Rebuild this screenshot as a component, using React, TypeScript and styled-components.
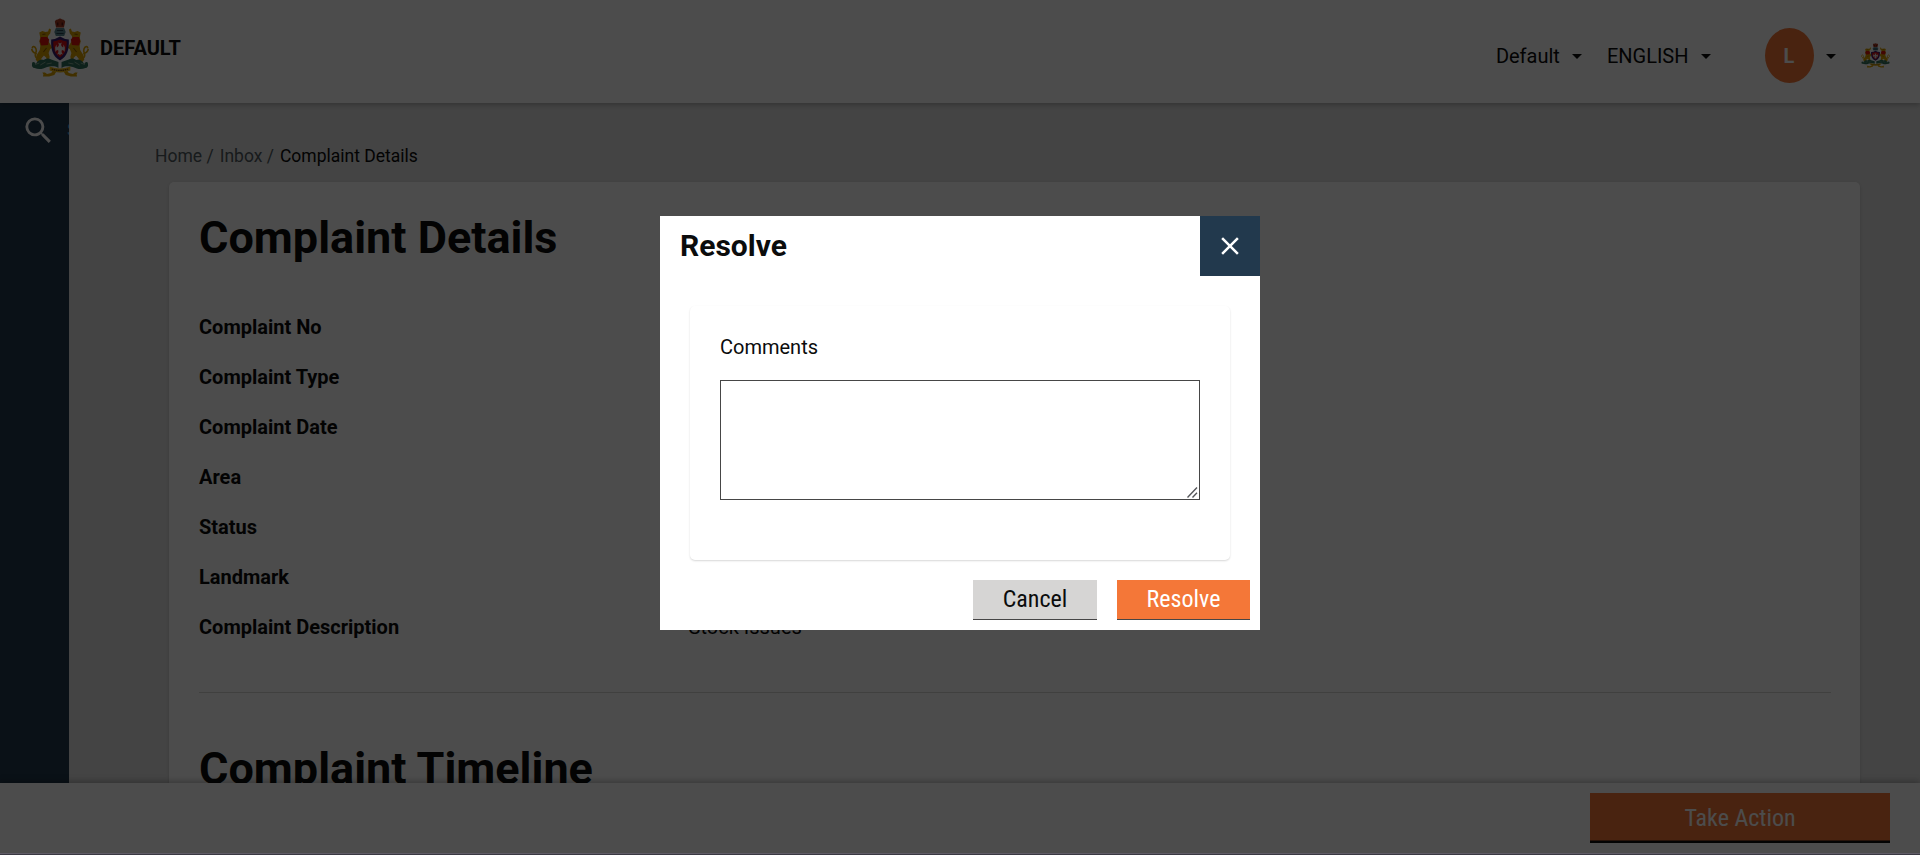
import React from 'react';
import styled, { createGlobalStyle } from 'styled-components';

const GlobalStyle = createGlobalStyle`
  *, *::before, *::after { box-sizing: border-box; }
  body { margin: 0; font-family: Roboto, sans-serif; color: #0b0c0c; }
  h1, h2, p { margin: 0; }
`;

const Page = styled.div`
  display: flex;
  flex-direction: column;
  height: 100vh;
  overflow: hidden;
  background: #e3e3e3;
`;

const TopBar = styled.header`
  position: relative;
  z-index: 2;
  display: flex;
  justify-content: space-between;
  align-items: flex-start;
  flex: none;
  height: 103px;
  padding: 0 30px 0 31px;
  background: #fff;
  box-shadow: 0 2px 5px rgba(0, 0, 0, 0.24);
`;

const Brand = styled.div`
  display: flex;
  align-items: center;
  gap: 11px;
  height: 96px;
  font-size: 20px;
  font-weight: 700;
`;

const Tools = styled.div`
  display: flex;
  align-items: center;
  height: 103px;
  padding-top: 8px;
  font-size: 20px;
`;

const Selector = styled.div<{ $after: number }>`
  display: flex;
  align-items: center;
  gap: 5.500px;
  margin-right: ${({ $after }) => $after}px;
`;

const Avatar = styled.div`
  display: flex;
  align-items: center;
  justify-content: center;
  width: 49px;
  height: 55px;
  border-radius: 50%;
  background: #f47738;
  color: #fff;
  font-weight: 700;
`;

const Middle = styled.div`
  display: flex;
  flex: 1;
  min-height: 0;
`;

const SideBar = styled.nav`
  display: flex;
  align-items: flex-start;
  flex: 0 0 69px;
  overflow: hidden;
  padding: 10px 0 0 21px;
  background: #22394d;
`;

const SearchIcon = styled.svg`
  flex: none;
  width: 35px;
  height: 35px;
  fill: #fff;
`;

const SideLabel = styled.span`
  margin-left: 11px;
  font-size: 18px;
  line-height: 34px;
  color: #3aa0d8;
`;

const Content = styled.main`
  flex: 1;
  min-width: 0;
  overflow: hidden;
  padding: 40px 60px 0 86px;
`;

const Breadcrumb = styled.div`
  display: flex;
  gap: 6px;
  height: 39px;
  font-size: 17.5px;
  line-height: 26px;
`;

const Crumb = styled.span<{ $current?: boolean }>`
  color: ${({ $current }) => ($current ? '#0b0c0c' : '#505a5f')};
`;

const DetailCard = styled.section`
  height: 760px;
  margin-left: 14px;
  padding: 26px 29px 25px 30px;
  border-radius: 5px;
  background: #fff;
  box-shadow: 0 1px 3px rgba(0, 0, 0, 0.16);
`;

const Heading = styled.h1`
  font-size: 45px;
  line-height: 60px;
  font-weight: 700;
`;

const Rows = styled.div`
  padding: 34px 0 40px;
  border-bottom: 1px solid #d6d5d4;
  margin-bottom: 46px;
`;

const Row = styled.div`
  display: grid;
  grid-template-columns: 30% 70%;
  height: 50px;
  font-size: 20px;
  line-height: 50px;
`;

const RowLabel = styled.span`
  font-weight: 700;
`;

const Footer = styled.footer`
  position: relative;
  z-index: 2;
  display: flex;
  justify-content: flex-end;
  flex: 0 0 72px;
  padding: 10px 30px;
  background: #fff;
  box-shadow: 0 -2px 6px rgba(0, 0, 0, 0.25);
`;

const TakeAction = styled.button`
  width: 300px;
  height: 50px;
  border: 0;
  padding: 0;
  background: #f47738;
  box-shadow: inset 0 -2px 0 #0b0c0c, inset 0 -3px 0 #7f4222;
  color: #fff;
  font: 24px/48px 'Roboto Condensed', Roboto, sans-serif;
`;

const Overlay = styled.div`
  position: fixed;
  inset: 0;
  z-index: 10;
  display: flex;
  justify-content: center;
  align-items: flex-start;
  padding-top: 216px;
  background: rgba(0, 0, 0, 0.7);
  box-shadow: inset 0 -1px 0 #3a3842, inset 0 -2px 0 #5f5b66;
`;

const Modal = styled.div`
  display: flex;
  flex-direction: column;
  width: 600px;
  height: 414px;
  background: #fff;
`;

const ModalHeader = styled.div`
  display: flex;
  justify-content: space-between;
  height: 60px;
  padding-left: 20px;
`;

const ModalTitle = styled.h2`
  font-size: 30px;
  line-height: 59px;
  font-weight: 700;
`;

const CloseButton = styled.button`
  display: flex;
  align-items: center;
  justify-content: center;
  width: 60px;
  height: 60px;
  border: 0;
  padding: 0;
  background: #22394d;
`;

const FormCard = styled.div`
  height: 254px;
  margin: 30px 30px 20px;
  padding: 26px 30px;
  border-radius: 5px;
  background: #fff;
  box-shadow: 0 1px 2px rgba(0, 0, 0, 0.16);
`;

const FieldLabel = styled.label`
  display: block;
  height: 48px;
  font-size: 20px;
  line-height: 30px;
`;

const CommentField = styled.div`
  position: relative;
  width: 480px;
  height: 120px;
`;

const CommentBox = styled.textarea`
  display: block;
  width: 100%;
  height: 100%;
  resize: none;
  border: 1px solid #464646;
  border-radius: 0;
  background: #fff;
  font: 20px Roboto, sans-serif;
  outline: none;
`;

const Grip = styled.svg`
  position: absolute;
  right: 2px;
  bottom: 2px;
  width: 11px;
  height: 11px;
  stroke: #55565a;
  stroke-width: 1.4;
`;

const Actions = styled.div`
  display: flex;
  justify-content: flex-end;
  gap: 20px;
  padding-right: 10px;
`;

const ActionButton = styled.button<{ $primary?: boolean }>`
  width: ${({ $primary }) => ($primary ? 133 : 124)}px;
  height: 40px;
  padding: 0 0 2px;
  border: 0;
  background: ${({ $primary }) => ($primary ? '#f47738' : '#d6d5d4')};
  box-shadow: inset 0 -1px 0 #464646;
  color: ${({ $primary }) => ($primary ? '#fff' : '#0b0c0c')};
  font: 24px/36px 'Roboto Condensed', Roboto, sans-serif;
`;

const Caret = () => (
  <svg width="24" height="24" viewBox="0 0 24 24">
    <path d="M7 10l5 5 5-5z" fill="#0b0c0c" />
  </svg>
);

/* State emblem: two supporters holding a shield beneath a lion capital. */
const Emblem = ({ width, height }: { width: number; height: number }) => (
  <svg width={width} height={height} viewBox="0 0 56 60" preserveAspectRatio="none">
    <path d="M23 3.500Q24 1 26 1.500Q28 -.5 30 1.500Q32 1 33 3.500L31.800 9.500H24.200Z" fill="#a83a24" />
    <path d="M25 4.500h1.500v3H25zM29.500 4.500H31v3h-1.500z" fill="#5c1a14" />
    <path d="M24 10h8l1.500 4-1.500 4h-8l-1.500-4z" fill="#5a8791" />
    <path d="M25 12.500h6M24.500 15.500h7" stroke="#26404d" strokeWidth="1.200" />
    {['translate(0 0)', 'translate(56 0) scale(-1 1)'].map((t) => (
      <g key={t} transform={t}>
        <path d="M8 14.500l3-1.500 3 1 2.500-.5 1-3 1.800 1-.8 4-2 2.500-.5 4 3 5 1.500 3-2 1-1.500 4 1 4-1.200 4.500-2.300.5.500-4-2.500-2.500-2.500 3 .5 4-3.500.5-2.500-3.500 1-4.500 3-5 .500-4-1-5 1-3z" fill="#d9a000" />
        <path d="M9.500 19h6l2 2.500-1 5.500-6.500.5-1.500-4z" fill="#e0140c" />
        <path d="M5.500 40C2 37 6 34.500 5 31.500 4 28 1 27.500 1.300 30.500M5.500 36C2.500 34.500.8 34 .8 31" fill="none" stroke="#d9a000" strokeWidth="1.600" />
        <path d="M11 16.500l3-.5M12 34l3-4" stroke="#8a5a00" strokeWidth="1" />
        <path d="M1 46c0-3 3-2 3.500 0 2-4 5-5 8-4 2-2 5-2 7-.5l7 2.500v6c-5-3-8-1-11-1-4 2-8 3-12 1-2 0-3-2-2.500-4z" fill="#2f705a" />
        <path d="M4 46.500l4-1.500M9 47l5-3M15 46l5-1" stroke="#9cb8a2" strokeWidth=".8" />
        <path d="M11 54.500h2.500l2 1.500 4-1 2-3 3 1.500-2 3.500-5 1.500h-6l.5-2z" fill="#d9a000" />
      </g>
    ))}
    <path d="M19.500 21.500q4.500-.3 8.500-3 4 2.700 8.500 3c.5 10-1.500 17-8.500 21-7-4-9-11-8.500-21z" fill="#371b70" />
    <path d="M21.500 23.500q3.500-.3 6.500-2 3 1.700 6.500 2c0 7-1 12-6.500 16-5.500-4-6.500-9-6.500-16z" fill="#d80f16" />
    <path d="M26.300 24.500l1.700 1 1.700-1-.7 2.500.8 1.500 1.200 1 .5-3 1.200 3-.2 4.500-1-1.500-1.700-.5-.3 2 1.200 2.500-1.700-.5-1 1.500-1-1.500-1.700.500 1.200-2.500-.3-2-1.700.5-1 1.500-.2-4.500 1.200-3 .5 3 1.200-1 .8-1.500z" fill="#e8e4e4" />
    <path d="M18 48.500q10 4 20 0v4q-10 4-20 0z" fill="#e6b416" />
    <path d="M20 51q8 2.800 16 0" fill="none" stroke="#5c3b10" strokeWidth="1.200" strokeDasharray="1.500 .6" />
  </svg>
);

const details: [string, string][] = [
  ['Complaint No', ''],
  ['Complaint Type', ''],
  ['Complaint Date', ''],
  ['Area', ''],
  ['Status', ''],
  ['Landmark', ''],
  ['Complaint Description', 'Stock Issues'],
];

export default function App() {
  return (
    <>
      <GlobalStyle />
      <Page>
        <TopBar>
          <Brand>
            <Emblem width={58} height={60} />
            DEFAULT
          </Brand>
          <Tools>
            <Selector $after={17.5}>
              Default
              <Caret />
            </Selector>
            <Selector $after={46.5}>
              ENGLISH
              <Caret />
            </Selector>
            <Selector $after={18}>
              <Avatar>L</Avatar>
              <Caret />
            </Selector>
            <Emblem width={29} height={25} />
          </Tools>
        </TopBar>
        <Middle>
          <SideBar>
            <SearchIcon viewBox="0 0 24 24">
              <path d="M15.500 14h-.79l-.28-.27A6.471 6.471 0 0 0 16 9.500 6.500 6.500 0 1 0 9.500 16c1.610 0 3.090-.59 4.230-1.570l.27.28v.79l5 4.990L20.490 19l-4.990-5zm-6 0C7.010 14 5 11.990 5 9.500S7.010 5 9.500 5 14 7.010 14 9.500 11.990 14 9.500 14z" />
            </SearchIcon>
            <SideLabel>S</SideLabel>
          </SideBar>
          <Content>
            <Breadcrumb>
              <Crumb>Home /</Crumb>
              <Crumb>Inbox /</Crumb>
              <Crumb $current>Complaint Details</Crumb>
            </Breadcrumb>
            <DetailCard>
              <Heading>Complaint Details</Heading>
              <Rows>
                {details.map(([label, value]) => (
                  <Row key={label}>
                    <RowLabel>{label}</RowLabel>
                    <span>{value}</span>
                  </Row>
                ))}
              </Rows>
              <Heading>Complaint Timeline</Heading>
            </DetailCard>
          </Content>
        </Middle>
        <Footer>
          <TakeAction>Take Action</TakeAction>
        </Footer>
      </Page>
      <Overlay>
        <Modal>
          <ModalHeader>
            <ModalTitle>Resolve</ModalTitle>
            <CloseButton aria-label="Close">
              <svg width="30" height="30" viewBox="0 0 24 24" fill="#fff">
                <path d="M19 6.410L17.590 5 12 10.590 6.410 5 5 6.410 10.590 12 5 17.590 6.410 19 12 13.410 17.590 19 19 17.590 13.410 12z" />
              </svg>
            </CloseButton>
          </ModalHeader>
          <FormCard>
            <FieldLabel htmlFor="comments">Comments</FieldLabel>
            <CommentField>
              <CommentBox id="comments" />
              <Grip viewBox="0 0 11 11">
                <path d="M.5 10.500L10 .5M5.500 10.500L10 5.800" />
              </Grip>
            </CommentField>
          </FormCard>
          <Actions>
            <ActionButton>Cancel</ActionButton>
            <ActionButton $primary>Resolve</ActionButton>
          </Actions>
        </Modal>
      </Overlay>
    </>
  );
}
